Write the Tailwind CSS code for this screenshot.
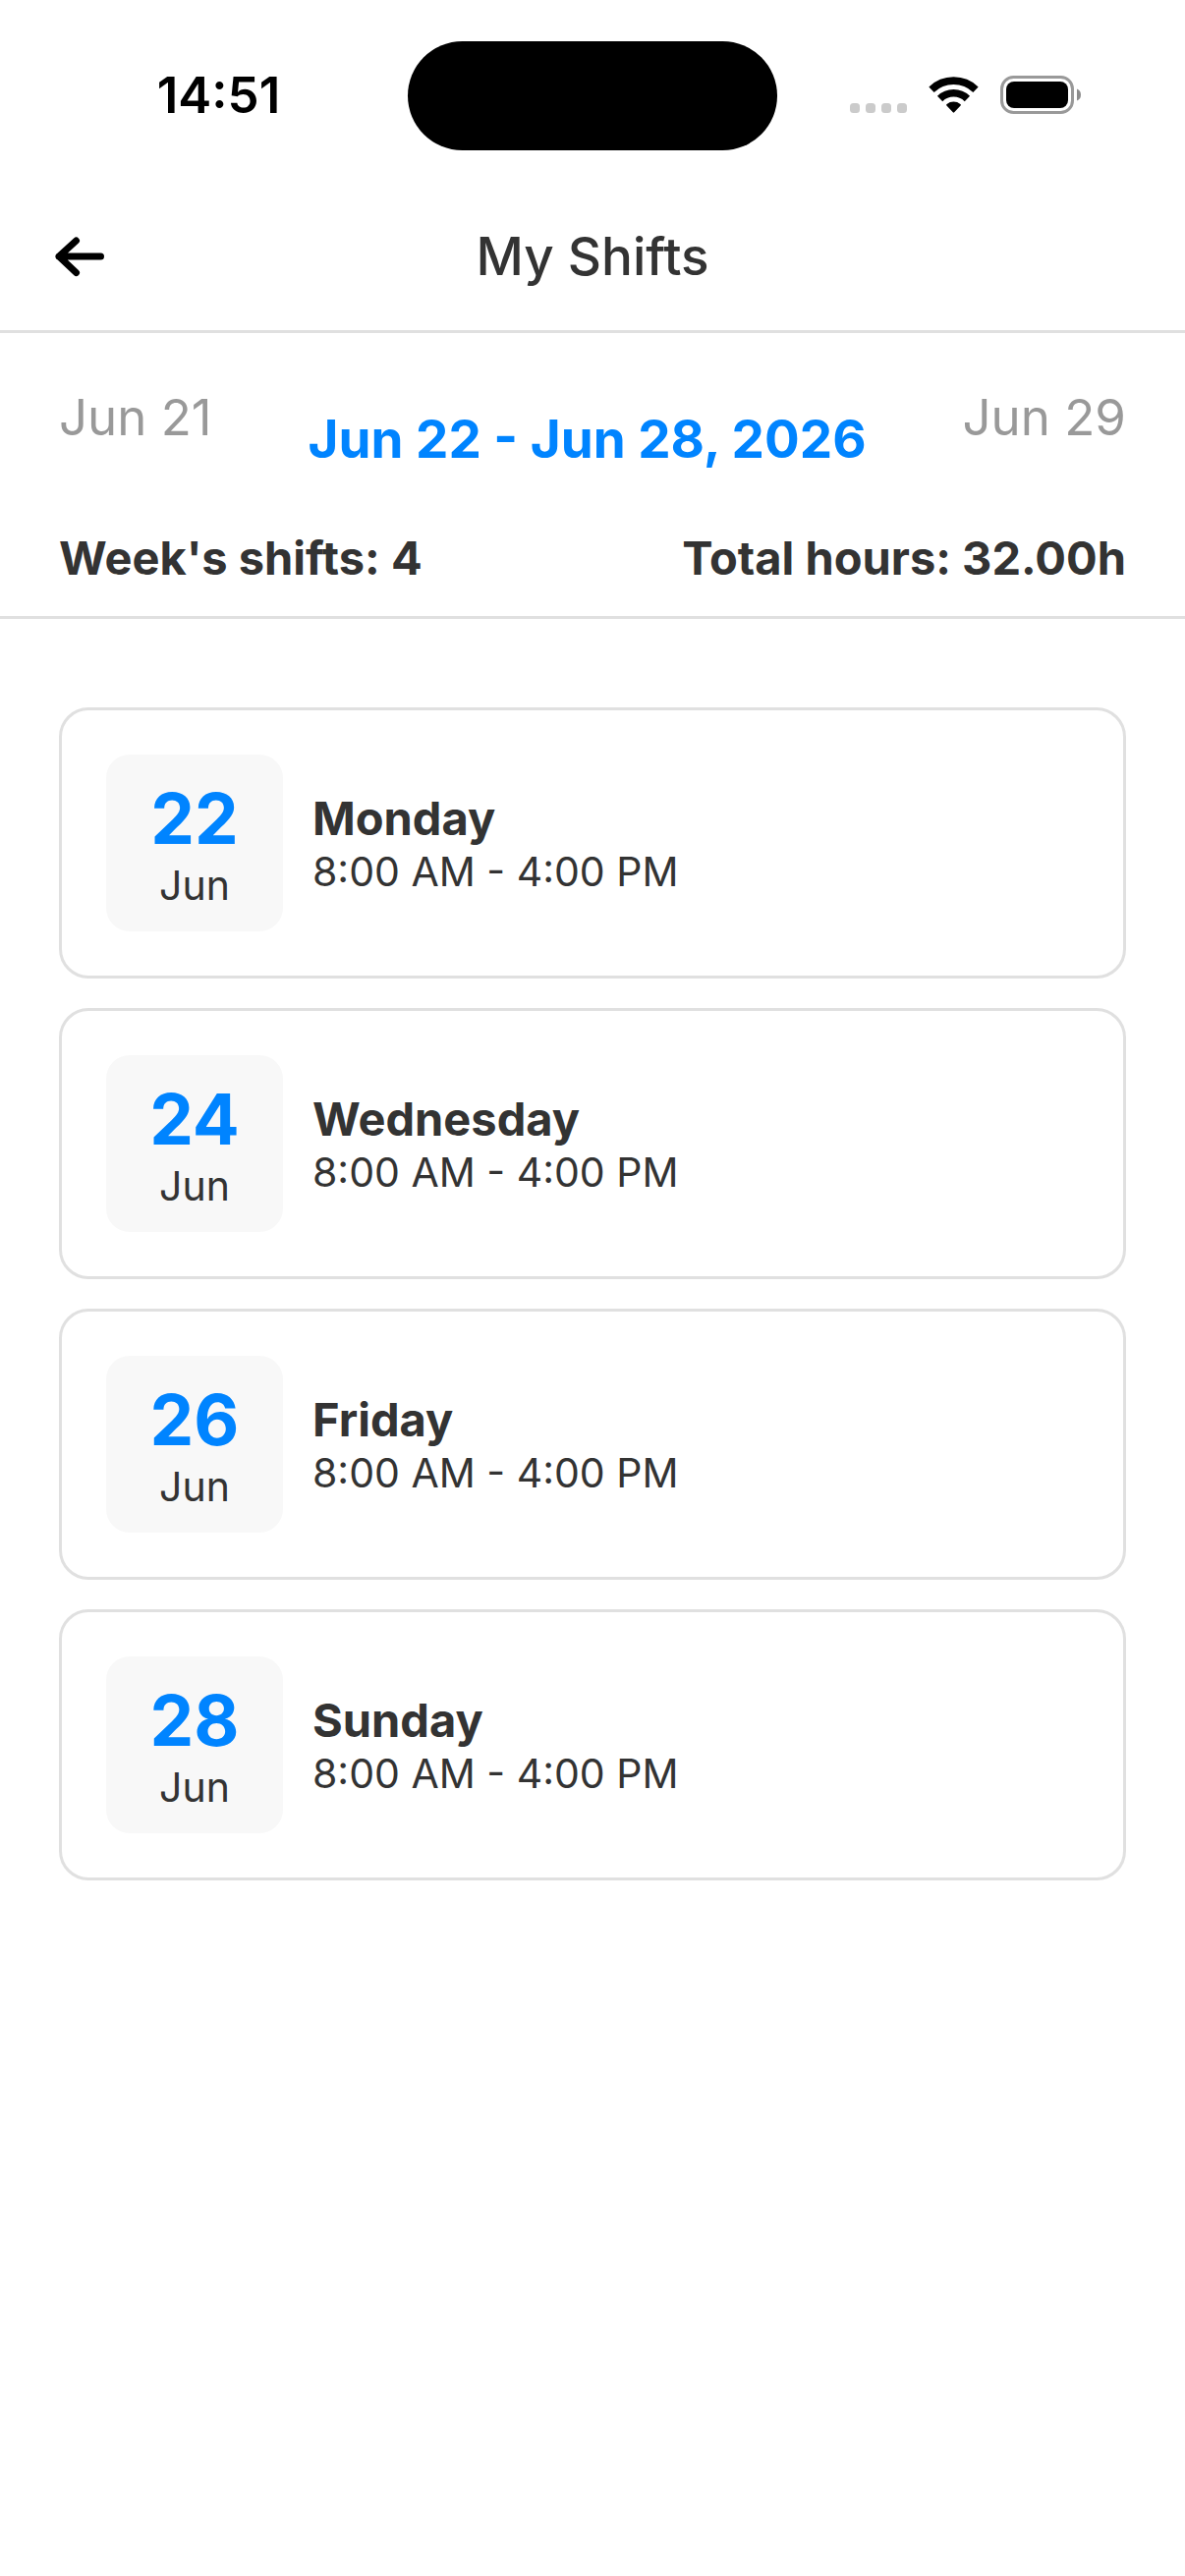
<!DOCTYPE html>
<html lang="en" class="bg-white">
<head>
  <meta charset="UTF-8">
  <meta name="viewport" content="width=device-width,initial-scale=1.0">
  <title>My Shifts</title>
  <script src="https://cdn.jsdelivr.net/npm/@tailwindcss/browser@4"></script>
</head>
<body class="min-h-screen bg-white font-['Inter',sans-serif] text-[#333333]">
  <!-- Status bar -->
  <div class="grid grid-cols-[1fr_376px_1fr] items-center h-[186px] pt-2 text-black">
    <div class="pl-[30px] text-center text-[51px] leading-[62px] font-semibold">14:51</div>
    <div class="h-[111px] rounded-full bg-black"></div>
    <div class="flex items-center justify-end pr-[106px]">
      <svg class="w-[235px] h-[40px]" viewBox="865 78 235 40" aria-hidden="true">
        <g fill="#cbcbcb">
          <rect x="865" y="106" width="10" height="10" rx="3.5"/>
          <rect x="881" y="106" width="10" height="10" rx="3.5"/>
          <rect x="897" y="106" width="10" height="10" rx="3.5"/>
          <rect x="913" y="106" width="10" height="10" rx="3.5"/>
        </g>
        <g fill="none" stroke="#000" stroke-width="7.6">
          <path d="M948 92.2A32.5 32.5 0 0 1 993 92.2"/>
          <path d="M956.6 101.4A20 20 0 0 1 984.4 101.4"/>
        </g>
        <path d="M963.4 108.6Q962.6 107.8 963.6 107A11 11 0 0 1 977.4 107Q978.4 107.8 977.6 108.6L971.2 115.3Q970.5 116 969.8 115.3Z"/>
        <rect x="1019.5" y="79.5" width="72" height="36" rx="12" fill="none" stroke="#999" stroke-width="3"/>
        <rect x="1024" y="84" width="63" height="27" rx="8"/>
        <path d="M1096 91.5Q1100 93 1100 97.5Q1100 102 1096 103.5Z" fill="#8c8c8c"/>
      </svg>
    </div>
  </div>

  <!-- Header -->
  <header class="grid grid-cols-[1fr_auto_1fr] items-center border-b-3 border-[#e0e0e0] px-[54px] h-[153px]">
    <button type="button" aria-label="Back" class="justify-self-start">
      <svg class="block w-[54px] h-[54px]" viewBox="0 0 54 54" fill="none" stroke="#000" stroke-width="7" stroke-linecap="round" stroke-linejoin="round" aria-hidden="true">
        <path d="M23.5 11L6 27L23.5 43.5M6 27H48.5"/>
        <path d="M12 24L8 27L12 30Z" stroke-width="3" fill="#000"/>
      </svg>
    </button>
    <h1 class="text-[53px] leading-[64px] font-medium">My Shifts</h1>
  </header>

  <!-- Week picker and totals -->
  <section class="border-b-3 border-[#e0e0e0] px-[60px] pt-[54px] pb-[30px]">
    <nav class="flex items-start justify-between leading-[64px]">
      <button type="button" class="text-[51px] text-[#999999]">Jun 21</button>
      <button type="button" class="pt-[22px] text-[53px] font-bold text-[#0084ff]">Jun 22 - Jun 28, 2026</button>
      <button type="button" class="text-[51px] text-[#999999]">Jun 29</button>
    </nav>
    <div class="flex justify-between mt-[60px] text-[47px] leading-[58px] font-bold">
      <p>Week's shifts: 4</p>
      <p>Total hours: 32.00h</p>
    </div>
  </section>

  <main>
    <ul id="shifts" class="flex flex-col gap-[30px] px-[60px] pt-[90px]"></ul>
  </main>

  <script>
const shifts = [
  { date: "22", month: "Jun", day: "Monday", time: "8:00 AM - 4:00 PM" },
  { date: "24", month: "Jun", day: "Wednesday", time: "8:00 AM - 4:00 PM" },
  { date: "26", month: "Jun", day: "Friday", time: "8:00 AM - 4:00 PM" },
  { date: "28", month: "Jun", day: "Sunday", time: "8:00 AM - 4:00 PM" }
];

const makeShift = s => `
  <li class="flex items-center gap-[30px] rounded-[30px] border-3 border-[#e0e0e0] p-[45px]">
    <div class="flex flex-col items-center justify-center size-[180px] rounded-[24px] bg-[#f8f8f8]">
      <span class="text-[71px] leading-[86px] font-bold text-[#0084ff]">${s.date}</span>
      <span class="text-[41px] leading-[50px]">${s.month}</span>
    </div>
    <div>
      <h2 class="text-[47px] leading-[58px] font-bold">${s.day}</h2>
      <p class="text-[41px] leading-[50px]">${s.time}</p>
    </div>
  </li>
`;
document.getElementById("shifts").innerHTML = shifts.map(makeShift).join("");
  </script>
</body>
</html>
